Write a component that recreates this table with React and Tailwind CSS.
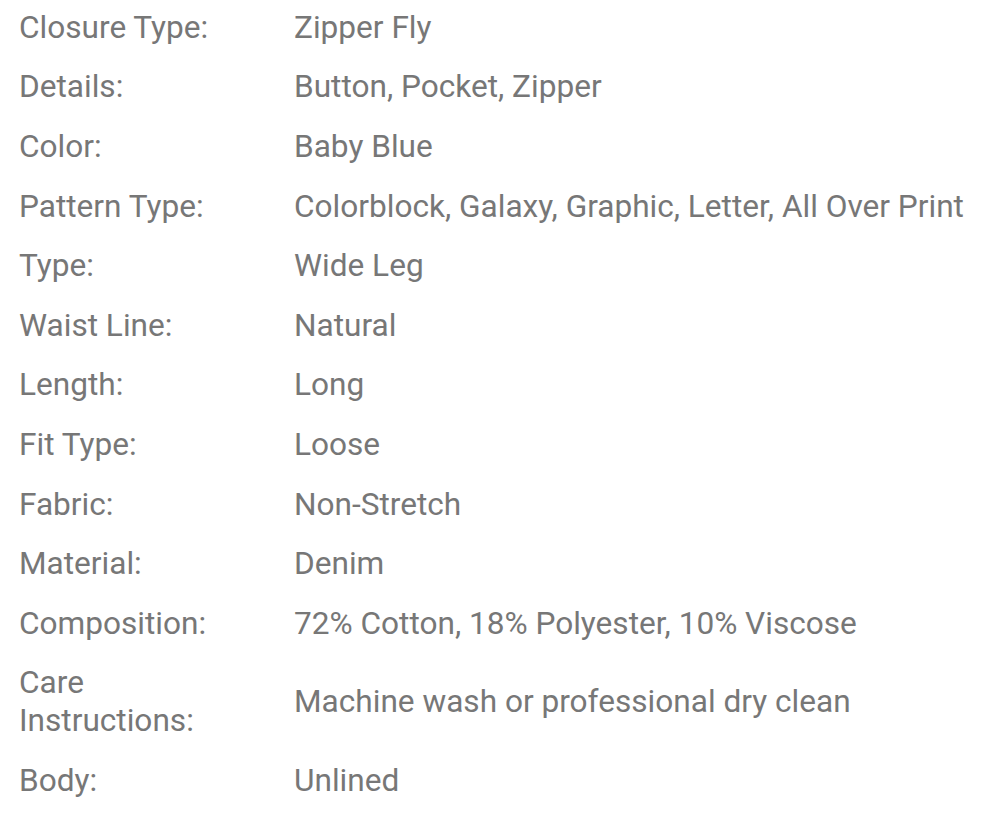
import React from 'react';

const specs = [
  ['Closure Type:', 'Zipper Fly'],
  ['Details:', 'Button, Pocket, Zipper'],
  ['Color:', 'Baby Blue'],
  ['Pattern Type:', 'Colorblock, Galaxy, Graphic, Letter, All Over Print'],
  ['Type:', 'Wide Leg'],
  ['Waist Line:', 'Natural'],
  ['Length:', 'Long'],
  ['Fit Type:', 'Loose'],
  ['Fabric:', 'Non-Stretch'],
  ['Material:', 'Denim'],
  ['Composition:', '72% Cotton, 18% Polyester, 10% Viscose'],
  ['Care Instructions:', 'Machine wash or professional dry clean'],
  ['Body:', 'Unlined'],
];

export default function App() {
  return (
    <div className="w-[988px] h-[814px] bg-white overflow-hidden font-['Roboto',sans-serif] text-[31.6px] leading-[38px] text-[#777777]">
      <div className="pl-[19px] mt-[-2px]">
        {specs.map(([label, value]) => (
          <div key={label} className="flex items-center py-[10.8px]">
            {/* Label */}
            <div className="w-[275px] shrink-0 pr-[60px]">{label}</div>
            {/* Value */}
            <div className="flex-1 whitespace-nowrap">{value}</div>
          </div>
        ))}
      </div>
    </div>
  );
}
